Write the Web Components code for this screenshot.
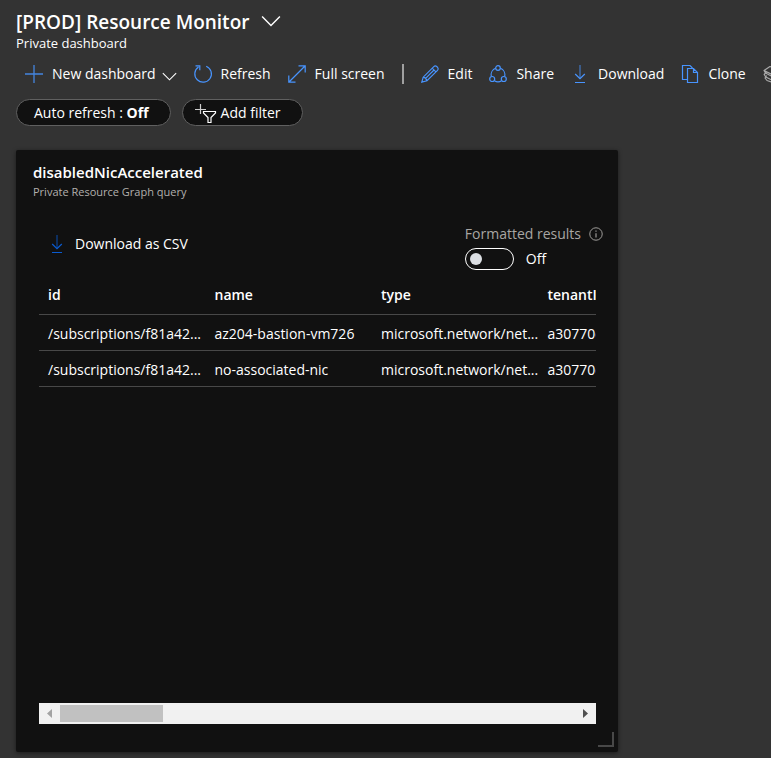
<!DOCTYPE html>
<html lang="en">
<head>
<meta charset="utf-8">
<title>[PROD] Resource Monitor</title>
<style>
html,body{margin:0;background:#333;color:#fff;font:14px/20px "Open Sans","Noto Sans",sans-serif;}
</style>
</head>
<body>
<dashboard-page></dashboard-page>
<script>
const define = (name, html, setup) => {
  const t = document.createElement('template');
  t.innerHTML = `<style>*{box-sizing:border-box}button{font:inherit;color:inherit;background:none;border:0;padding:0;margin:0;cursor:pointer;white-space:nowrap}</style>` + html;
  customElements.define(name, class extends HTMLElement {
    constructor(){ super(); this.attachShadow({mode:'open'}).append(t.content.cloneNode(true)); }
    connectedCallback(){ if(setup) setup(this, this.shadowRoot); }
  });
};

const icons = {
  plus:'<path d="M9 0v18M0 9h18" stroke-width="1.3" opacity=".85"/>',
  chevron:'<path d="M1 5l8 8 8-8" stroke-width="1.3"/>',
  refresh:'<path d="M12.200 1.200A8.300 8.300 0 1 1 4.500 2M1.500 .8h4.300v4.500"/>',
  expand:'<path d="M1 17L17 1M10.500 .8h6.700v6.700M.8 10.500v6.700h6.700"/>',
  pencil:'<path d="M.8 17.200l1.400-5L12.800 1.600Q14.200 .2 15.700 1.500l.9.900Q17.900 4 16.500 5.400L6 15.800zM11.200 3.200l3.700 3.700M2.200 12.200q3 .4 3.700 3.600M4.600 13.400L13 5"/>',
  share:'<path d="M6.600 3.300A7 7 0 0 0 2.300 11.200M11.400 3.300a7 7 0 0 1 4.300 7.900M5.400 15.800a7 7 0 0 0 7.200 0"/><circle cx="9" cy="3" r="2.300"/><circle cx="3.200" cy="14" r="2.500"/><circle cx="14.800" cy="14" r="2.500"/>',
  download:'<path d="M9 0v13.500" opacity=".7"/><path d="M4.200 9L9 13.700 13.800 9M4 17.500h10" stroke-width="1.200"/>',
  copy:'<path d="M6.500 14.500h-5v-14H9l2.500 2.500M6.500 3.500h6l4 4v10h-10zM12.500 3.500v4h4"/>',
  layers:'<path d="M1 5.500L7 1.500l10 3-6 6zM1 5.500l1.500 2.500 9.500 5 5-6M3.500 6.800L1.200 9.500l1.600 2.500 9 4.500 5-6M3.800 10.500L2 13l2 2.500 7.500 2.500 5.500-4" stroke-linejoin="round"/>',
  filter:'<path d="M5.500 0v10M0 5.500h11" opacity=".8"/><path d="M8.500 7.500h12v1.500l-4.500 4.500v5h-3v-5L8.500 9z"/>',
  info:'<circle cx="9" cy="9" r="8"/><path d="M9 8v5.500M9 4.500v1.700" stroke-width="1.400"/>'
};
define('ui-icon', `<style>:host{display:block;flex:none;width:18px;height:18px}svg{display:block;width:100%;height:100%;overflow:visible;fill:none;stroke:currentColor;stroke-width:1.2}</style><svg viewBox="0 0 18 18" aria-hidden="true"></svg>`,
  (h,r)=>{ r.querySelector('svg').innerHTML = icons[h.getAttribute('name')] || ''; });

define('tool-button', `<style>
:host{display:block;flex:none}
button{display:flex;align-items:center;gap:9px;height:24px}
ui-icon{color:var(--icon,#4894fe)}
</style><button type="button"><slot></slot></button>`,
  (h,r)=>{
    const b=r.querySelector('button'), i=document.createElement('ui-icon');
    i.setAttribute('name',h.getAttribute('icon'));
    b.prepend(i);
    if(h.hasAttribute('label')) b.setAttribute('aria-label',h.getAttribute('label'));
  });

define('pill-button', `<style>
:host{display:block;flex:none}
button{display:flex;align-items:center;gap:8px;height:27px;padding:0 21px 0 17px;border:1px solid #606060;border-radius:14px;background:#111}
:host([wide]) button{padding-left:12px}
::slotted(ui-icon){align-self:flex-start;margin-top:4px}
</style><button type="button"><slot></slot></button>`);

define('page-header', `<style>
:host{display:block;padding:9px 16px 0}
.top{display:flex;align-items:center;gap:12px;height:26px}
h1{margin:0;font-size:19px;line-height:26px;font-weight:600;white-space:nowrap}
.top button{padding-bottom:3px}
ui-icon{width:20px;height:20px}
p{margin:0;font-size:13px;line-height:16px}
</style>
<div class="top"><h1>[PROD] Resource Monitor</h1><button type="button" aria-label="Switch dashboard"><ui-icon name="chevron"></ui-icon></button></div>
<p>Private dashboard</p>`);

define('command-bar', `<style>
:host{display:flex;align-items:center;gap:17px;overflow:hidden;padding:11px 0 0 25px}
.new{display:flex;align-items:center;gap:6px}
.new button{padding-top:4px}
.new ui-icon{width:15px;height:15px}
.sep{flex:none;width:2px;height:20px;background:#a0a0a0}
.more{--icon:#aaa}
</style>
<div class="new"><tool-button icon="plus">New dashboard</tool-button><button type="button" aria-label="More dashboard types"><ui-icon name="chevron"></ui-icon></button></div>
<tool-button icon="refresh">Refresh</tool-button>
<tool-button icon="expand">Full screen</tool-button>
<div class="sep"></div>
<tool-button icon="pencil">Edit</tool-button>
<tool-button icon="share">Share</tool-button>
<tool-button icon="download">Download</tool-button>
<tool-button icon="copy">Clone</tool-button>
<tool-button class="more" icon="layers" label="More"></tool-button>`);

define('filter-bar', `<style>:host{display:flex;gap:11px;padding:13px 16px 0}</style>
<pill-button><span>Auto refresh : <b>Off</b></span></pill-button>
<pill-button wide><ui-icon name="filter"></ui-icon>Add filter</pill-button>`);

define('toggle-field', `<style>
:host{display:block}
.top{display:flex;align-items:center;gap:8px;height:24px;color:#a8a6a3}
.top ui-icon{width:14px;height:14px}
.row{display:flex;align-items:center;gap:12px;height:26px}
input{appearance:none;margin:0;width:49px;height:22px;border:1px solid #fff;border-radius:11px;display:flex;align-items:center;padding:0 4px}
input::before{content:"";width:12px;height:12px;border-radius:50%;background:#dcdfe3}
input:checked{justify-content:flex-end}
</style>
<div class="top"><label for="t">Formatted results</label><button type="button" aria-label="About formatted results"><ui-icon name="info"></ui-icon></button></div>
<div class="row"><input id="t" type="checkbox" role="switch" aria-labelledby="t-label"><span id="t-label">Off</span></div>`,
  (h,r)=>{ r.querySelector('input').removeAttribute('aria-labelledby'); });

define('result-table', `<style>
:host{display:block;overflow:hidden}
table{border-collapse:collapse;table-layout:fixed;width:666px}
th,td{height:36px;padding:3px 0 0 9px;text-align:left;border-bottom:1px solid #484848;white-space:nowrap}
th{height:40px;padding-top:2px;font-weight:600}
</style>
<table><thead><tr><th>id</th><th>name</th><th>type</th><th>tenantId</th></tr></thead>
<tbody><tr><td>/subscriptions/f81a42...</td><td>az204-bastion-vm726</td><td>microsoft.network/net...</td><td>a30770c</td></tr>
<tr><td>/subscriptions/f81a42...</td><td>no-associated-nic</td><td>microsoft.network/net...</td><td>a30770c</td></tr></tbody></table>`);

define('scroll-strip', `<style>
:host{display:grid;grid-template-columns:21px 1fr 21px;height:21px;background:#f1f1f1}
button{display:grid;place-items:center}
svg{width:5px;height:9px;display:block}
.track{display:flex;padding:2px 0}
.thumb{width:20%;background:#c1c1c1}
</style>
<button type="button" aria-label="Scroll left"><svg viewBox="0 0 5 9"><path d="M5 0v9L0 4.500z" fill="#a3a3a3"/></svg></button>
<div class="track"><div class="thumb"></div></div>
<button type="button" aria-label="Scroll right"><svg viewBox="0 0 5 9"><path d="M0 0v9l5-4.500z" fill="#505050"/></svg></button>`);

define('query-tile', `<style>
:host{display:flex;flex-direction:column;position:relative;background:#111;border-radius:2px;box-shadow:0 1px 4px rgba(0,0,0,.5);padding:12px 22px 28px 23px;min-width:0}
header{margin-left:-6px}
h2{margin:0;font-size:15px;line-height:20px;font-weight:600}
p{margin:0;font-size:11px;line-height:20px;color:#b3b0ad}
.tools{display:flex;justify-content:space-between;padding:20px 0 2px 9px}
.csv{--icon:#0a5bd0;margin-top:10px}
toggle-field{margin-right:-7px}
scroll-strip{margin-top:auto}
.grip{position:absolute;right:4px;bottom:5px;width:16px;height:15px;border:solid #484848;border-width:0 2px 2px 0}
</style>
<header><h2>disabledNicAccelerated</h2><p>Private Resource Graph query</p></header>
<div class="tools"><tool-button class="csv" icon="download">Download as CSV</tool-button><toggle-field></toggle-field></div>
<result-table></result-table>
<scroll-strip></scroll-strip>
<div class="grip"></div>`);

define('dashboard-page', `<style>
:host{display:flex;flex-direction:column;min-height:100vh}
main{flex:1;display:grid;grid-template-columns:minmax(0,1fr) 153px;padding:24px 0 6px 16px}
</style>
<page-header></page-header><command-bar></command-bar><filter-bar></filter-bar>
<main><query-tile></query-tile></main>`);
</script>
</body>
</html>
